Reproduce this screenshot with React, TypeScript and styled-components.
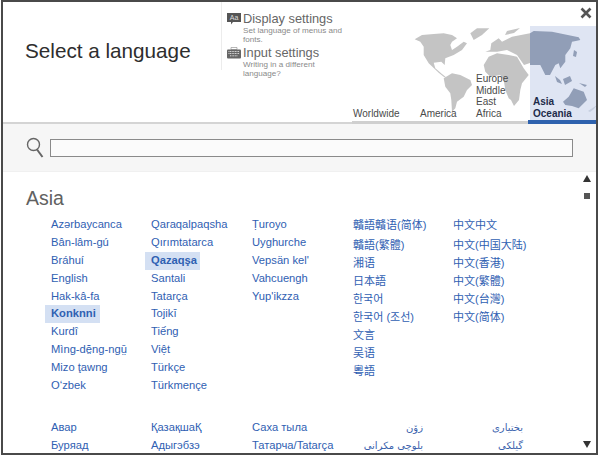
import React from 'react';
import styled, { createGlobalStyle } from 'styled-components';

const Global = createGlobalStyle`
  html, body { margin: 0; padding: 0; background: #fff; overflow: hidden; }
  body { font-family: "Liberation Sans", Arial, sans-serif; }
`;

const Frame = styled.div`
  width: 597px; height: 455px; margin-left: 1px; box-sizing: border-box;
  border: 2px solid #4a4a4a;
  display: flex; flex-direction: column; overflow: hidden; background: #fff;
`;
const Header = styled.header`
  height: 120px; flex: none; display: flex; position: relative;
  border-bottom: 2px solid #d4d4d4; box-sizing: content-box;
`;
const Title = styled.h1`
  margin: 36px 0 0 22px; width: 196px; flex: none;
  font-size: 20.7px; line-height: 26px; font-weight: 400; color: #2e2e2e;
`;
const Settings = styled.div`
  width: 128px; flex: none; height: 68px; padding: 10px 0 0 5px;
  border-left: 1px solid #ececec; box-sizing: border-box;
`;
const SettingBlock = styled.div`margin-bottom: 2px;`;
const SettingTitle = styled.div`
  display: flex; align-items: center; gap: 2px;
  font-size: 12.8px; line-height: 14px; color: #666;
`;
const SettingText = styled.div`
  margin-left: 16px; margin-top: 1px; width: 108px;
  font-size: 8.1px; line-height: 8.5px; color: #8a8a8a;
`;
const MapPanel = styled.div`
  flex: 1; position: relative; display: flex; align-items: flex-end; padding-left: 4px;
`;
const MapArt = styled.svg`
  position: absolute; right: 0; top: 0; width: 245px; height: 120px;
`;
const Tab = styled.div<{ $w: number; $active?: boolean }>`
  position: relative; width: ${p => p.$w}px; flex: none; box-sizing: border-box;
  font-size: 10px; line-height: 11.5px; padding-bottom: 3px;
  color: ${p => (p.$active ? '#1d2b4a' : '#4a4a4a')};
  font-weight: ${p => (p.$active ? 700 : 400)};
  padding-left: ${p => (p.$active ? 5 : 0)}px;
`;
const TabGrey = styled.div`
  position: absolute; left: 349px; top: 119px; width: 176px; height: 3px; background: #cfcfcf;
`;
const TabBlue = styled.div`
  position: absolute; left: 525px; top: 118px; right: 0; height: 4px; background: #2e62ae;
`;
const Close = styled.button`
  position: absolute; right: 3px; top: 4px; width: 14px; height: 14px; padding: 0;
  border: 0; background: none; display: flex;
`;
const SearchBand = styled.div`
  height: 48px; flex: none; background: #f6f6f6; display: flex; align-items: center;
  padding-left: 23px; box-sizing: border-box; gap: 6px; border-bottom: 1px solid #f0f0f0;
`;
const SearchField = styled.div`
  width: 523px; height: 18px; margin-top: 1px; box-sizing: border-box;
  border: 1px solid #8a8a8a; background: #fbfbfb;
`;
const Body = styled.div`
  flex: 1; min-height: 0; display: flex; overflow: hidden;
`;
const Content = styled.main`
  flex: 1; min-width: 0; padding: 14px 0 0 23px;
`;
const Heading = styled.h2`
  margin: 0; font-size: 19.5px; line-height: 24px; font-weight: 400; color: #616161;
`;
const Grid = styled.div<{ $top: number }>`
  display: grid; grid-template-columns: 100px 101px 101px 100px 100px; margin: ${p => p.$top}px 0 0 25px;
`;
const Col = styled.ul`
  list-style: none; margin: 0; padding: 0;
`;
const Item = styled.li<{ $sel?: boolean; $cjk?: boolean }>`
  font-family: "Liberation Sans", "Noto Sans CJK SC", "Noto Sans CJK KR", sans-serif;
  font-size: ${p => (p.$cjk ? 11 : 11.2)}px;
  line-height: ${p => (p.$cjk ? 18.1 : 17.9)}px;
  height: ${p => (p.$cjk ? 18.1 : 17.9)}px;
  color: #2f60b2; white-space: nowrap;
  font-weight: ${p => (p.$sel ? 700 : 400)};
  ${p => p.$cjk && '&:first-child { margin-bottom: 1.5px; }'}
  ${p => p.$sel && 'margin-left:-6px; padding-left:6px; width:49px; background:#d4e0f3;'}
`;
const ArabicCol = styled.ul<{ $right: number }>`
  list-style: none; margin: 0; padding: 0 ${p => p.$right}px 0 0; text-align: right;
`;
const ArabicItem = styled.li<{ $pad?: number }>`
  font-family: "DejaVu Sans", "Noto Sans", sans-serif; font-size: 10px; line-height: 17.9px; height: 17.9px;
  color: #3a62ad; white-space: nowrap; padding-left: ${p => p.$pad ?? 0}px;
`;
const Scroll = styled.div`
  width: 18px; flex: none; position: relative; display: flex; flex-direction: column;
  align-items: center; justify-content: space-between; padding: 3px 0 5px 0; box-sizing: border-box;
`;
const ScrollTop = styled.div`display: flex; flex-direction: column; align-items: center; gap: 11px;`;
const Thumb = styled.div`width: 6px; height: 6px; background: #555;`;
const Arrow = styled.svg`width: 8px; height: 7px; display: block;`;

const col1 = ['Azərbaycanca', 'Bân-lâm-gú', 'Bráhuí', 'English', 'Hak-kâ-fa', 'Konknni', 'Kurdî', 'Mìng-dĕ̤ng-ngṳ̄', 'Mizo ţawng', 'Oʻzbek'];
const col2 = ['Qaraqalpaqsha', 'Qırımtatarca', 'Qazaqşa', 'Santali', 'Tatarça', 'Tojikī', 'Tiếng', 'Việt', 'Türkçe', 'Türkmençe'];
const col3 = ['Ṭuroyo', 'Uyghurche', "Vepsän kel'", 'Vahcuengh', "Yup'ikzza"];
const col4 = ['贛語贛语(简体)', '贛語(繁體)', '湘语', '日本語', '한국어', '한국어 (조선)', '文言', '吴语', '粵語'];
const col5 = ['中文中文', '中文(中国大陆)', '中文(香港)', '中文(繁體)', '中文(台灣)', '中文(简体)'];
const selected = ['Konknni', 'Qazaqşa'];

const renderList = (list: string[], cjk?: boolean) => (
  <Col>
    {list.map(t => (
      <Item key={t} $cjk={cjk} $sel={selected.includes(t)}>{t}</Item>
    ))}
  </Col>
);

const WorldMap = () => (
  <MapArt viewBox="351 2 245 120">
    <g fill="#c4c4c4">
      <path d="M412.7 39.3L420 35 431.7 34 441.7 33.3 450 35 455 38.3 450 41.7 448.3 45 450 50 455 46.7 461.7 41.7 465 43.3 460 50 451.7 55 443.3 58.3 442.7 65 439.3 61.7 431.7 62.7 433.3 68.3 440 74 445 78 442 77 437 73 426.7 63.3 421.7 55 421.7 46.7 418.3 41.7Z" />
      <path d="M468.3 33.3L475 28.3 487.3 28.3 480 35 471.7 40Z" />
      <path d="M441.7 78.3L450 73.3 458.3 75 468.3 80 470 85 465 90 461.7 96.7 455 101.7 453.3 108.3 450 111.7 449.3 100 448.3 93.3 443.3 86.7Z" />
      <path d="M481.7 65L486.7 56.7 495 53.3 506.7 55 515 56.7 521.7 68.3 526.7 75 520 83.3 518.3 90 517 100 512 106 509 100 506.7 98.3 503.3 90 501.7 80 498.3 75 488.3 76.7 483.3 71.7Z" />
      <path d="M483.3 51.7L488.3 50 489.3 43.3 496.7 38.3 500 41.7 510 36.7 528 33.3 528 63 522 65 515 55 505 50 495 51.7Z" />
      <path d="M505 31L518 28 512 33 503 35Z" />
    </g>
    <rect x="528" y="26" width="70" height="96" fill="#dfe5f3" />
    <g fill="#919eb7">
      <path d="M528 33.3L531.7 31 550 31.7 576.7 37.3 578.3 40 575 40.7 570 41.7 568.3 48.3 563.3 55 563.3 61.7 558.3 68.3 556.7 63.3 553.3 65 548 75 543.3 75 538.3 65 528 65Z" />
      <path d="M561 101.7L566.7 96.7 571.7 88.3 581.7 91.7 585 100 576.7 108.3 570 106 563.3 105Z" />
      <path d="M553 76L558 80 560 84 555 82Z" />
      <path d="M561 79L568 76 570 81 563 85Z" />
      <path d="M577 83L585 85 583 87Z" />
      <path d="M572 50L575 52 574 57 571 56Z" />
    </g>
    <path d="M586 111L595 105 592 109 588 112Z" fill="#c6cfe0" />
  </MapArt>
);

const DisplayIcon = () => (
  <svg width="14" height="12" viewBox="0 0 14 12">
    <path d="M0 0h14v9H6l-2 2.5V9H0z" fill="#555" />
    <text x="7" y="7.3" textAnchor="middle" fontSize="7" fill="#ddd" fontFamily="Liberation Sans">Aa</text>
  </svg>
);
const KeyIcon = () => (
  <svg width="14" height="12" viewBox="0 0 14 12">
    <path d="M4 0.5h6v2H4z" fill="none" stroke="#888" strokeWidth="0.6" />
    <rect x="0" y="2.5" width="14" height="9" rx="1" fill="#666" />
    <path d="M1.5 4.5h11M1.5 6.5h11M3 8.8h8" stroke="#ddd" strokeWidth="1" strokeDasharray="1 0.6" />
  </svg>
);

export default function App() {
  return (
    <>
      <Global />
      <Frame>
        <Header>
          <Title>Select a language</Title>
          <Settings>
            <SettingBlock>
              <SettingTitle><DisplayIcon />Display settings</SettingTitle>
              <SettingText>Set language of menus and fonts.</SettingText>
            </SettingBlock>
            <SettingBlock>
              <SettingTitle><KeyIcon />Input settings</SettingTitle>
              <SettingText>Writing in a different<br />language?</SettingText>
            </SettingBlock>
          </Settings>
          <MapPanel>
            <WorldMap />
            <Tab $w={67}>Worldwide</Tab>
            <Tab $w={56}>America</Tab>
            <Tab $w={52}>Europe<br />Middle East<br />Africa</Tab>
            <Tab $w={70} $active>Asia<br />Oceania</Tab>
          </MapPanel>
          <TabGrey />
          <TabBlue />
          <Close aria-label="Close">
            <svg width="14" height="14" viewBox="0 0 14 14">
              <path d="M2.5 2.5l9 9M11.5 2.5l-9 9" stroke="#555" strokeWidth="2.6" />
            </svg>
          </Close>
        </Header>
        <SearchBand>
          <svg width="18" height="21" viewBox="0 0 18 21">
            <circle cx="7.5" cy="7.5" r="6" fill="none" stroke="#666" strokeWidth="1.4" />
            <path d="M11 12.5l5.5 7.5" stroke="#666" strokeWidth="2" />
          </svg>
          <SearchField />
        </SearchBand>
        <Body>
          <Content>
            <Heading>Asia</Heading>
            <Grid $top={6}>
              {renderList(col1)}
              {renderList(col2)}
              {renderList(col3)}
              {renderList(col4, true)}
              {renderList(col5, true)}
            </Grid>
            <Grid $top={24}>
              {renderList(['Авар', 'Буряад'])}
              {renderList(['ҚазақшаҚ', 'Адыгэбзэ'])}
              {renderList(['Саха тыла', 'Татарча/Tatarça'])}
              <ArabicCol $right={30}>
                <ArabicItem $pad={12} dir="rtl">زۆن</ArabicItem>
                <ArabicItem dir="rtl">بلوچی مکرانی</ArabicItem>
              </ArabicCol>
              <ArabicCol $right={30}>
                <ArabicItem dir="rtl">بختیاری</ArabicItem>
                <ArabicItem dir="rtl">گیلکی</ArabicItem>
              </ArabicCol>
            </Grid>
          </Content>
          <Scroll>
            <ScrollTop>
              <Arrow viewBox="0 0 8 7"><path d="M4 0l4 7H0z" fill="#333" /></Arrow>
              <Thumb />
            </ScrollTop>
            <Arrow viewBox="0 0 8 7"><path d="M0 0h8L4 7z" fill="#333" /></Arrow>
          </Scroll>
        </Body>
      </Frame>
    </>
  );
}
